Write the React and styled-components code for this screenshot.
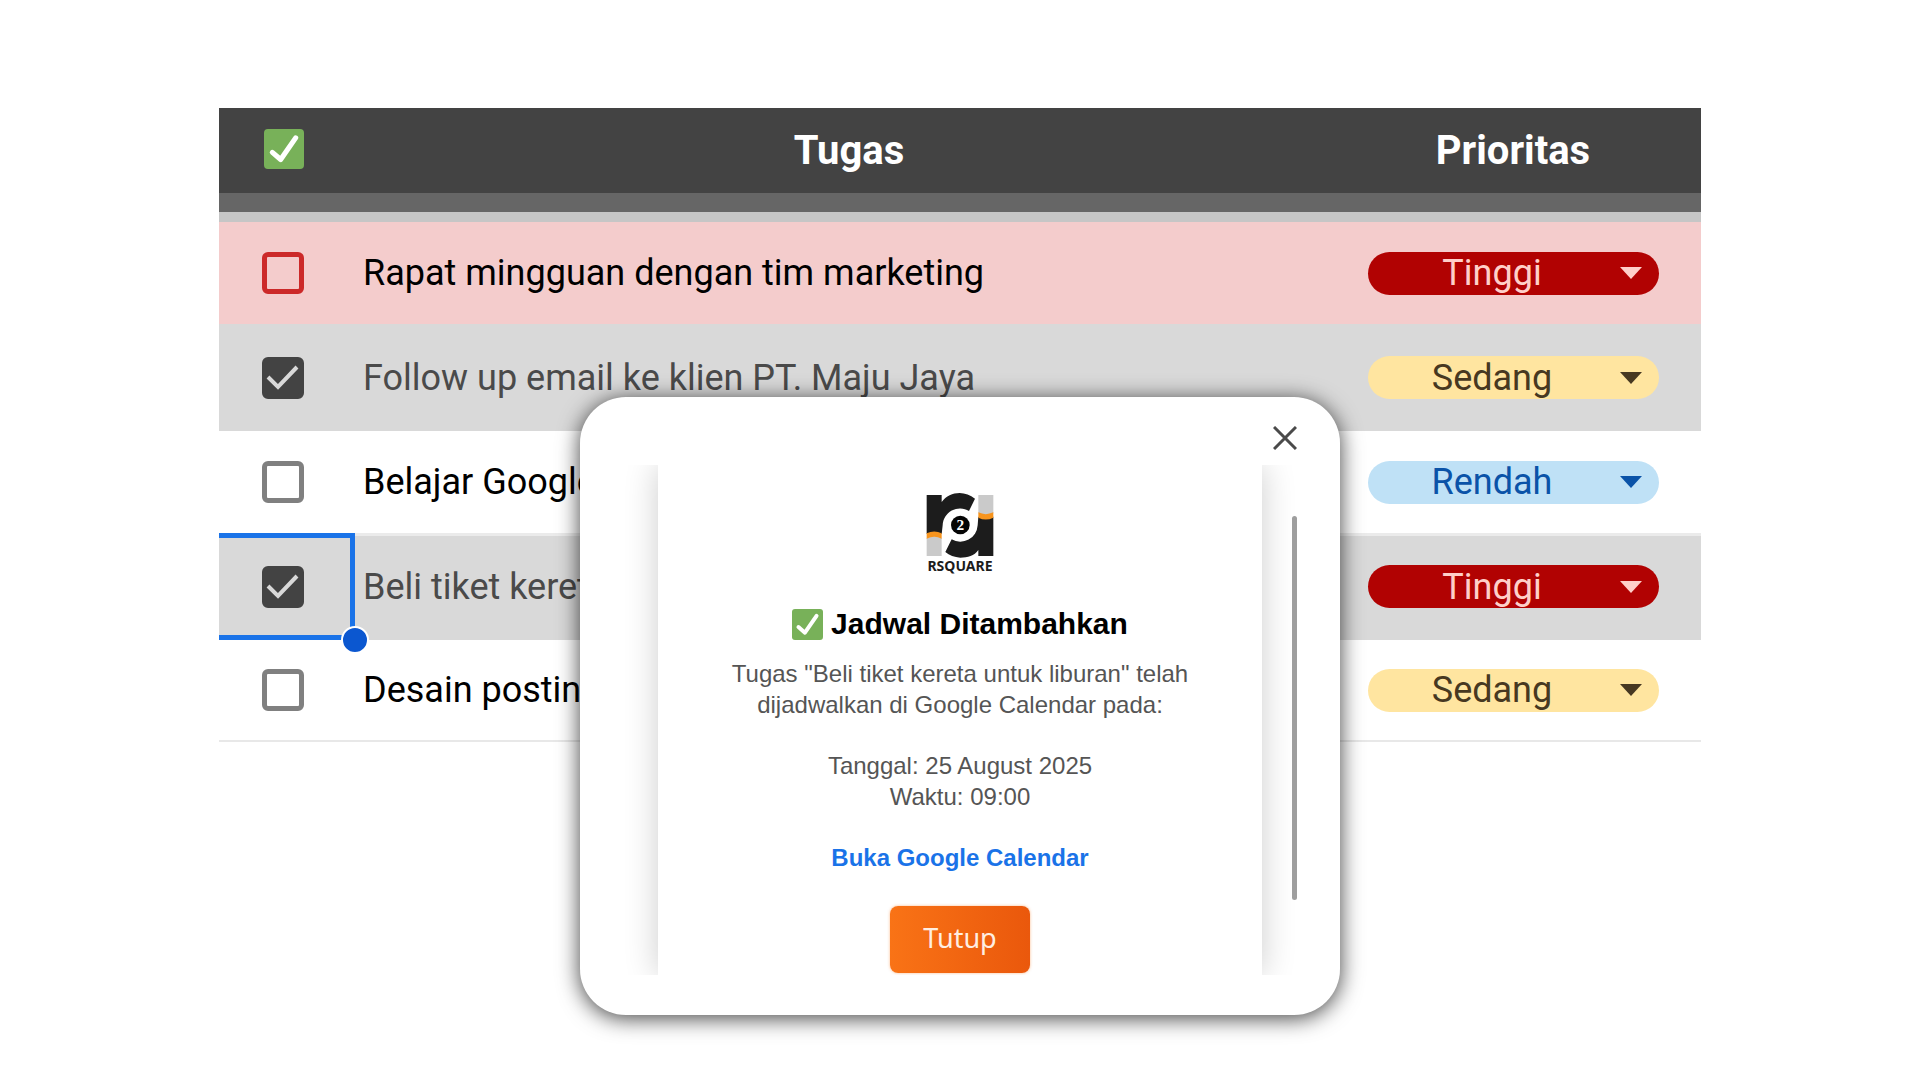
import React, { useState } from "react";
import styled, { createGlobalStyle } from "styled-components";

const GlobalStyle = createGlobalStyle`
  * { box-sizing: border-box; }
  body {
    margin: 0;
    background: #ffffff;
    font-family: Roboto, "Noto Sans", sans-serif;
  }
`;

const Page = styled.main`
  min-height: 100vh;
  padding: 108px 24px 64px;
`;

const Sheet = styled.div`
  position: relative;
  max-width: 1482px;
  margin: 0 auto;
`;

const TaskTable = styled.table`
  width: 100%;
  table-layout: fixed;
  border-collapse: separate;
  border-spacing: 0;
  border-bottom: 2px solid #e8e8e8;
`;

const CheckCol = styled.col`
  width: 136px;
`;

const PriorityCol = styled.col`
  width: 358px;
`;

const HeadCell = styled.th`
  height: 85px;
  padding: ${(p) => (p.$kind === "priority" ? "0 18px 0 0" : p.$kind === "check" ? "0 6px 4px 0" : "0")};
  background: #434343;
  color: #ffffff;
  font-size: 40px;
  line-height: 44px;
  font-weight: 700;
  text-align: center;

  svg {
    display: block;
    margin: 0 auto;
  }
`;

const Band = styled.td`
  height: 29px;
  padding: 0;
  background: #666666;
  border-bottom: 10px solid #c6c6c6;
`;

const rowTones = {
  urgent: { background: "#f4cccc", text: "#000000", box: "#cc2929" },
  done: { background: "#d9d9d9", text: "#4a4a4a", box: "#434343" },
  open: { background: "#ffffff", text: "#000000", box: "#808080" },
};

const Row = styled.tr`
  height: ${(p) => (p.$tone === "done" ? 107 : 102)}px;
  background: ${(p) => rowTones[p.$tone].background};
  color: ${(p) => rowTones[p.$tone].text};

  &:last-child {
    height: 100px;
  }
`;

const cellPadding = {
  check: "0 8px 0 0",
  name: "0 8px",
  priority: "0 18px 0 0",
};

const Cell = styled.td`
  position: relative;
  padding: ${(p) => cellPadding[p.$kind]};
  box-shadow: ${(p) => (p.$ruled ? "inset 0 3px #ebebeb" : "none")};
  font-size: 36px;
  line-height: 42px;
  white-space: nowrap;
`;

const CheckLabel = styled.label`
  display: grid;
  width: 42px;
  height: 42px;
  margin: 0 auto;

  > * {
    grid-area: 1 / 1;
  }

  svg {
    pointer-events: none;
  }
`;

const CheckInput = styled.input`
  appearance: none;
  width: 42px;
  height: 42px;
  margin: 0;
  border: 5px solid ${(p) => rowTones[p.$tone].box};
  border-radius: 6px;

  &:checked {
    background: #434343;
  }
`;

const Selection = styled.span`
  position: absolute;
  inset: 0;
  border: 5px solid #1a73e8;
  border-left: 0;
  pointer-events: none;

  &::after {
    content: "";
    position: absolute;
    right: -19px;
    bottom: -19px;
    width: 24px;
    height: 24px;
    border: 2px solid #ffffff;
    border-radius: 50%;
    background: #0b57d0;
  }
`;

const pillTones = {
  Tinggi: { background: "#b10202", text: "#ffcfc9" },
  Sedang: { background: "#ffe5a0", text: "#473821" },
  Rendah: { background: "#bfe1f6", text: "#0a53a8" },
};

const Pill = styled.div`
  display: grid;
  width: 291px;
  height: 43px;
  margin: 0 auto;
  align-items: center;
  border-radius: 22px;
  background: ${(p) => pillTones[p.$level].background};
  color: ${(p) => pillTones[p.$level].text};

  > * {
    grid-area: 1 / 1;
  }

  svg {
    justify-self: end;
    margin-right: 17px;
    pointer-events: none;
  }
`;

const PillSelect = styled.select`
  appearance: none;
  width: 100%;
  height: 43px;
  padding: 0 42px 0 0;
  border: 0;
  background: transparent;
  color: inherit;
  font: inherit;
  text-align: center;
  text-align-last: center;
`;

const Dialog = styled.section`
  position: absolute;
  top: 289px;
  left: 50%;
  width: 760px;
  max-width: 100%;
  padding-bottom: 40px;
  transform: translateX(-50%);
  border-radius: 46px;
  background: #ffffff;
  box-shadow: 0 3px 22px rgba(0, 0, 0, 0.75);
  font-family: "Liberation Sans", Arial, sans-serif;
`;

const DialogBar = styled.div`
  display: flex;
  justify-content: flex-end;
  padding: 24px 38px 10px;
`;

const CloseButton = styled.button`
  display: grid;
  place-items: center;
  width: 34px;
  height: 34px;
  padding: 0;
  border: 0;
  background: transparent;
  color: #4a4a4a;
`;

const DialogBody = styled.div`
  display: grid;
  grid-template-columns: 1fr minmax(0, 604px) 1fr;
  overflow: hidden;
`;

const Card = styled.div`
  grid-column: 2;
  display: flex;
  flex-direction: column;
  align-items: center;
  padding: 27px 40px 2px;
  box-shadow: 0 0 32px rgba(0, 0, 0, 0.2);
  text-align: center;
`;

const ScrollThumb = styled.div`
  grid-column: 3;
  width: 5px;
  height: 384px;
  margin: 51px 0 0 30px;
  border-radius: 3px;
  background: #9e9e9e;
`;

const Brand = styled.div`
  display: flex;
  flex-direction: column;
  align-items: center;
  color: #1c1c1c;
  font-family: "Noto Sans", sans-serif;
  font-size: 14px;
  line-height: 16px;
  font-weight: 700;
`;

const Title = styled.h2`
  display: flex;
  align-items: center;
  gap: 8px;
  margin: 32px 0 16px;
  color: #000000;
  font-size: 30px;
  line-height: 36px;
  font-weight: 700;
`;

const Message = styled.p`
  margin: 0 0 30px;
  color: #555555;
  font-size: 24px;
  line-height: 31px;
`;

const CalendarLink = styled.a`
  color: #1a73e8;
  font-size: 24px;
  line-height: 31px;
  font-weight: 700;
  text-decoration: none;
`;

const PrimaryButton = styled.button`
  width: 140px;
  height: 67px;
  margin-top: 33px;
  padding: 0 0 4px;
  border: 0;
  border-radius: 8px;
  background: linear-gradient(90deg, #f97316, #ea580c);
  box-shadow: 0 0 3px rgba(249, 115, 22, 0.5);
  color: #ffeee2;
  font-family: "Noto Sans", sans-serif;
  font-size: 27px;
  line-height: 36px;
`;

const GreenCheck = ({ size }) => (
  <svg width={size} height={size} viewBox="0 0 36 36" aria-hidden="true">
    <rect width="36" height="36" rx="3.5" fill="#78b159" />
    <path d="M7.5 21 L15 27.5 L28.5 8" fill="none" stroke="#ffffff" strokeWidth="4.6" strokeLinecap="round" strokeLinejoin="round" />
  </svg>
);

const Arrow = () => (
  <svg width="22" height="12" viewBox="0 0 22 12" aria-hidden="true">
    <path d="M0 0 H22 L11 12 Z" fill="currentColor" />
  </svg>
);

const BrandMark = () => (
  <svg width="68" height="66" viewBox="135 66 204 198" aria-hidden="true">
    <path d="M137 204 Q160 194 182 204 V258 H137 Z" fill="#cacaca" />
    <path d="M292 75 H337 V130 Q314 140 292 130 Z" fill="#cacaca" />
    <path d="M137 75 H182 V96 C195 78 215 69 236 69 C252 69 268 76 282 86 L264 123 A52 52 0 0 0 185 166 L182 192 Q160 182 137 192 Z" fill="#1c1c1c" />
    <path d="M337 258 H292 V240 C280 258 260 263 238 263 C220 262 205 256 193 246 L212 208 A52 52 0 0 0 290 166 L292 140 Q314 150 337 140 Z" fill="#1c1c1c" />
    <path d="M137 190 Q160 179 182 190 V206 Q160 195 137 206 Z" fill="#f7941d" />
    <path d="M292 127 Q314 138 337 127 V143 Q314 154 292 143 Z" fill="#f7941d" />
    <circle cx="238" cy="165" r="28" fill="#050505" />
    <text x="238" y="181" textAnchor="middle" fontFamily="Liberation Serif, serif" fontWeight="700" fontSize="46" fill="#ffffff">2</text>
  </svg>
);

const initialTasks = [
  { name: "Rapat mingguan dengan tim marketing", level: "Tinggi", tone: "urgent", done: false },
  { name: "Follow up email ke klien PT. Maju Jaya", level: "Sedang", tone: "done", done: true },
  { name: "Belajar Google", level: "Rendah", tone: "open", done: false },
  { name: "Beli tiket kereta", level: "Tinggi", tone: "done", done: true, selected: true },
  { name: "Desain posting", level: "Sedang", tone: "open", done: false },
];

function TaskRow({ task }) {
  const [done, setDone] = useState(task.done);
  const [level, setLevel] = useState(task.level);
  return (
    <Row $tone={task.tone}>
      <Cell $kind="check" $ruled={task.selected}>
        <CheckLabel>
          <CheckInput
            type="checkbox"
            aria-label={task.name}
            $tone={task.tone}
            checked={done}
            onChange={() => setDone(!done)}
          />
          {done && (
            <svg width="42" height="42" viewBox="0 0 42 42" aria-hidden="true">
              <path d="M6 20 L16 30 L35 10" fill="none" stroke="#d9d9d9" strokeWidth="4" />
            </svg>
          )}
        </CheckLabel>
        {task.selected && <Selection />}
      </Cell>
      <Cell $kind="name" $ruled={task.selected}>{task.name}</Cell>
      <Cell $kind="priority" $ruled={task.selected}>
        <Pill $level={level}>
          <PillSelect aria-label="Prioritas" value={level} onChange={(e) => setLevel(e.target.value)}>
            {Object.keys(pillTones).map((name) => (
              <option key={name}>{name}</option>
            ))}
          </PillSelect>
          <Arrow />
        </Pill>
      </Cell>
    </Row>
  );
}

export default function App() {
  const [open, setOpen] = useState(true);
  return (
    <Page>
      <GlobalStyle />
      <Sheet>
        <TaskTable>
          <colgroup>
            <CheckCol />
            <col />
            <PriorityCol />
          </colgroup>
          <thead>
            <tr>
              <HeadCell $kind="check"><GreenCheck size={40} /></HeadCell>
              <HeadCell>Tugas</HeadCell>
              <HeadCell $kind="priority">Prioritas</HeadCell>
            </tr>
          </thead>
          <tbody>
            <tr><Band colSpan={3} /></tr>
            {initialTasks.map((task) => (
              <TaskRow key={task.name} task={task} />
            ))}
          </tbody>
        </TaskTable>
        {open && (
          <Dialog role="dialog" aria-labelledby="dialog-title">
            <DialogBar>
              <CloseButton aria-label="Tutup dialog" onClick={() => setOpen(false)}>
                <svg width="24" height="24" viewBox="0 0 24 24" aria-hidden="true">
                  <path d="M1 1 L23 23 M23 1 L1 23" stroke="currentColor" strokeWidth="3" />
                </svg>
              </CloseButton>
            </DialogBar>
            <DialogBody>
              <Card>
                <Brand>
                  <BrandMark />
                  RSQUARE
                </Brand>
                <Title id="dialog-title">
                  <GreenCheck size={31} />
                  Jadwal Ditambahkan
                </Title>
                <Message>
                  Tugas "Beli tiket kereta untuk liburan" telah
                  <br />
                  dijadwalkan di Google Calendar pada:
                </Message>
                <Message>
                  Tanggal: 25 August 2025
                  <br />
                  Waktu: 09:00
                </Message>
                <CalendarLink href="#calendar">Buka Google Calendar</CalendarLink>
                <PrimaryButton onClick={() => setOpen(false)}>Tutup</PrimaryButton>
              </Card>
              <ScrollThumb />
            </DialogBody>
          </Dialog>
        )}
      </Sheet>
    </Page>
  );
}
